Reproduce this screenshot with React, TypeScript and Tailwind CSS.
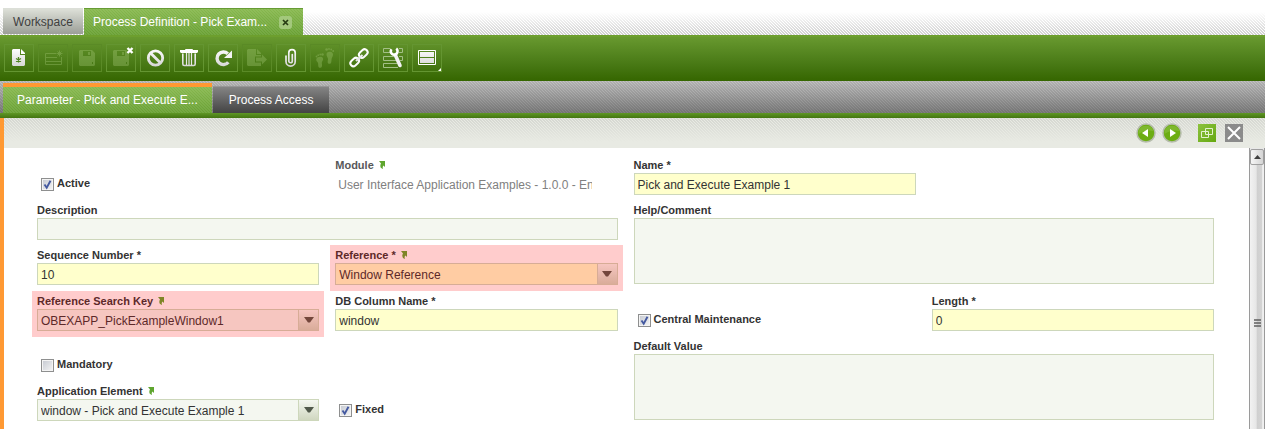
import { useId, useState, type ReactNode } from 'react';

function Svg({ children }: { children: ReactNode }) {
  return (
    <svg viewBox="0 0 20 20" width="20" height="20" className="overflow-visible" aria-hidden="true">
      {children}
    </svg>
  );
}

const NewIcon = (
  <Svg>
    <defs>
      <linearGradient id="metal" x1="0" y1="0" x2="0" y2="20" gradientUnits="userSpaceOnUse">
        <stop offset="0" stopColor="#ffffff" />
        <stop offset="1" stopColor="#d2d2d2" />
      </linearGradient>
    </defs>
    <path d="M4 1h7v6h5v10l-1 1H4l-1-1V2z" fill="url(#metal)" />
    <path d="M12 1l4 4v1h-4z" fill="#fff" />
    <path d="M9.500 9v5.500M7 10.500l5 3M12 10.500l-5 3" stroke="#4f8520" strokeWidth="1.300" />
  </Svg>
);

const GridIcon = (
  <Svg>
    <g fill="none" stroke="#a5c977">
      <path d="M13 5.500H2.500v11h16V9M2.500 9.500H14M2.500 13.500h16" />
      <path d="M16.500 2.500v6M13.500 5.500h6M14.500 3.500l4 4M18.500 3.500l-4 4" />
    </g>
  </Svg>
);

const floppy = (
  <path
    fill="#a5c977"
    fillRule="evenodd"
    d="M3 2h12l3 3v12l-1 1H3l-1-1V3zM6 3v5h8V3zM11 4h2v3h-2zM15 14h1v2h-1z"
  />
);

const SaveIcon = <Svg>{floppy}</Svg>;

const SaveCloseIcon = (
  <Svg>
    <g opacity="0.35">{floppy}</g>
    <path d="M16.500 0l5 5M21.500 0l-5 5" stroke="#fff" strokeWidth="2.400" />
  </Svg>
);

const BanIcon = (
  <Svg>
    <g fill="none" stroke="url(#metal)" strokeWidth="2.800">
      <circle cx="10.500" cy="10" r="7.200" />
      <path d="M5.500 5l10 10" />
    </g>
  </Svg>
);

const TrashIcon = (
  <Svg>
    <path d="M6.500 3V1.500h7V3" fill="none" stroke="#fff" />
    <path d="M1 2h18v2l-1 1H2L1 4z" fill="#fff" />
    <path d="M3.800 5.500V16q0 1.500 1.500 1.500h9.400q1.500 0 1.500-1.500V5.500" fill="none" stroke="url(#metal)" strokeWidth="1.600" />
    <path d="M7.500 5v12M10 5v12M12.500 5v12" stroke="#e8e8e8" strokeWidth="1.200" />
  </Svg>
);

const RefreshIcon = (
  <Svg>
    <path d="M14.800 5.800A6.300 6.300 0 1 0 15.300 14.200" fill="none" stroke="url(#metal)" strokeWidth="3.400" />
    <path d="M19 2.500V10h-8z" fill="#f4f4f4" />
  </Svg>
);

const ExportIcon = (
  <Svg>
    <path d="M1 1h8v6h5v1.500H8v6h6V18H1l-1-1V2z" fill="#a5c977" />
    <path d="M10 1l4 4v1h-4z" fill="#a5c977" />
    <path d="M9 9.500h6V6.500l5 5-5 5v-3H9z" fill="#a5c977" />
  </Svg>
);

const ClipIcon = (
  <Svg>
    <path
      d="M5 8v5.500a4.600 4.600 0 0 0 9.200 0V4.800a3.200 3.200 0 0 0-6.400 0V13a1.700 1.700 0 0 0 3.500 0V6.500"
      fill="none"
      stroke="url(#metal)"
      strokeWidth="1.700"
      strokeLinecap="round"
    />
  </Svg>
);

const StepsIcon = (
  <Svg>
    <g fill="#a5c977">
      <path d="M1.300 11c1-2.500 5.500-3 6.700-.8.800 2-1.500 3.300-1.200 5 .6 2 .4 4.600-1.800 4.600-2.400 0-1.500-3-2-4.800-.4-1.400-2.300-2.200-1.700-4z" />
      <path d="M11.500 6c.5-2.500 4.500-3 6.200-.8 1 1.900-.5 3.500-1 5.300-.5 2 .2 5.300-2.200 5.300-2.200 0-2-2.300-1.500-4.300.4-1.800-1.900-3.300-1.500-5.500z" />
      <circle cx="1.500" cy="8.500" r=".9" />
      <circle cx="3.200" cy="7.200" r=".9" />
      <circle cx="5.200" cy="6.500" r=".9" />
      <circle cx="7.500" cy="6.500" r="1.300" />
      <circle cx="11.600" cy="1.500" r="1.300" />
      <circle cx="14" cy="1" r=".9" />
      <circle cx="16.200" cy="1.500" r=".9" />
      <circle cx="18.200" cy="3" r=".9" />
    </g>
  </Svg>
);

const LinkIcon = (
  <Svg>
    <g fill="none" stroke="url(#metal)" strokeWidth="2">
      <rect x="-4.800" y="-3" width="9.600" height="6" rx="3" transform="translate(14.300 5.500) rotate(-43)" />
      <rect x="-4.800" y="-3" width="9.600" height="6" rx="3" transform="translate(5.700 14) rotate(-43)" />
      <path d="M7 13l6.500-6" />
    </g>
  </Svg>
);

const ToolsIcon = (
  <Svg>
    <g fill="none" stroke="#a3bf86">
      <path d="M7 .5H.5v4H7M16 .5h3.500v4H16M11 8.500H.5v4H13M16 8.500h3.500v4H17M14 15.500H.5v4H15" />
    </g>
    <path d="M12.300 7l4.700 10.500" stroke="#f2f2f2" strokeWidth="3.600" strokeLinecap="round" />
    <path d="M8.500 1.200A3.400 3.400 0 1 0 13.200 .6" fill="none" stroke="#fff" strokeWidth="2.600" />
  </Svg>
);

const LayoutIcon = (
  <Svg>
    <path d="M1.500 2.500h17v14h-17z" fill="none" stroke="#fff" />
    <path d="M3 4h14v5H3zM3 10h14v5H3z" fill="url(#metal)" />
    <path d="M24 20v3h-3z" fill="#fff" />
  </Svg>
);

const tools = [
  { label: 'New', icon: NewIcon, off: false },
  { label: 'New in grid', icon: GridIcon, off: true },
  { label: 'Save', icon: SaveIcon, off: true },
  { label: 'Save and close', icon: SaveCloseIcon, off: false },
  { label: 'Undo', icon: BanIcon, off: false },
  { label: 'Delete', icon: TrashIcon, off: false },
  { label: 'Refresh', icon: RefreshIcon, off: false },
  { label: 'Export', icon: ExportIcon, off: true },
  { label: 'Attachments', icon: ClipIcon, off: false },
  { label: 'Audit trail', icon: StepsIcon, off: true },
  { label: 'Link', icon: LinkIcon, off: false },
  { label: 'Customize', icon: ToolsIcon, off: false },
  { label: 'View', icon: LayoutIcon, off: false },
];

function Jump() {
  return (
    <svg viewBox="0 0 7 8" width="7" height="8" className="mt-[2px] ml-[5px] shrink-0" aria-hidden="true">
      <path d="M0 0h6v6L4.500 4.500Q3 5.500 4 8 .5 7 1.500 3.500L2 2.500z" fill="#5fa62f" />
    </svg>
  );
}

type FieldProps = {
  label: string;
  place: string;
  link?: boolean;
  muted?: boolean;
  marked?: boolean;
  children: (id: string) => ReactNode;
};

function Field({ label, place, link, muted, marked, children }: FieldProps) {
  const id = useId();
  return (
    <div className={'relative min-w-0 ' + place}>
      <div className="flex h-[14px] items-start">
        <label htmlFor={id} className={'text-[11px] leading-3 font-bold whitespace-nowrap ' + (muted ? 'text-[#58585a]' : 'text-[#333333]')}>
          {label}
        </label>
        {link && <Jump />}
      </div>
      {children(id)}
      {marked && <div className="pointer-events-none absolute -inset-x-[5px] -top-1 -bottom-[6px] bg-[#ff0000]/20" />}
    </div>
  );
}

const box = 'block w-full rounded-none border border-[#cdd7bb] text-[12px] text-[#333333] outline-none ';

function TextBox({ id, value, required }: { id: string; value: string; required?: boolean }) {
  return <input id={id} type="text" defaultValue={value} className={box + 'h-[22px] px-[3px] pt-px ' + (required ? 'bg-[#ffffcc]' : 'bg-[#f4f7f0]')} />;
}

function Area({ id }: { id: string }) {
  return <textarea id={id} className={box + 'h-[66px] resize-none bg-[#f4f7f0] px-[3px]'} />;
}

function Combo({ id, value, required }: { id: string; value: string; required?: boolean }) {
  return (
    <div className="relative">
      <select id={id} className={box + 'h-[22px] appearance-none pt-px pr-6 pl-[3px] ' + (required ? 'bg-[#ffffcc]' : 'bg-[#f4f7f0]')}>
        <option>{value}</option>
      </select>
      <div className="pointer-events-none absolute top-0 right-0 flex h-[22px] w-[21px] items-center justify-center border border-[#cdd7bb] bg-linear-to-b from-[#f4f7f0] to-[#d0d7c0]">
        <svg viewBox="0 0 10 6" width="10" height="6" aria-hidden="true">
          <path d="M0 0h10L6 5.500H4z" fill="#50584a" />
        </svg>
      </div>
    </div>
  );
}

function Check({ label, place, initial }: { label: string; place: string; initial: boolean }) {
  const [on, setOn] = useState(initial);
  return (
    <div className={'min-w-0 pt-[17px] pl-1 ' + place}>
      <label className="flex items-start text-[11px] leading-[14px] font-bold text-[#333333]">
        <span className="relative mt-[2px] mr-[3px] block size-[13px]">
          <input
            type="checkbox"
            checked={on}
            onChange={() => setOn(!on)}
            className="block size-[13px] appearance-none border border-[#8e8f8f] bg-linear-to-br from-[#c4c8d0] to-[#f6f6f6] shadow-[inset_0_0_0_1px_#f4f4f4]"
          />
          {on && (
            <svg viewBox="0 0 13 13" width="13" height="13" className="pointer-events-none absolute top-0 left-0" aria-hidden="true">
              <path d="M3.500 6.500l2.200 3.200L9.500 2.800" fill="none" stroke="#4459a0" strokeWidth="1.900" />
            </svg>
          )}
        </span>
        {label}
      </label>
    </div>
  );
}

function RoundButton({ label, d }: { label: string; d: string }) {
  return (
    <button type="button" aria-label={label} className="size-5">
      <svg viewBox="0 0 20 20" width="20" height="20" aria-hidden="true">
        <circle cx="10" cy="10" r="9" fill="#6cad12" stroke="#b5bcab" strokeWidth="1.500" />
        <path d="M2.500 8a8 8 0 0 1 15 0q-8-2-15 3z" fill="#8bc040" opacity=".6" />
        <path d={d} fill="#fff" />
      </svg>
    </button>
  );
}

export default function App() {
  return (
    <div className="flex min-h-screen flex-col bg-white font-['Liberation_Sans',Arial,sans-serif] text-[12px] text-[#333333]">
      <nav className="flex h-[35px] items-end gap-px bg-[linear-gradient(to_bottom,#fff_35%,#ffffff33),linear-gradient(45deg,#c4c4c4_17%,#fff_17%,#fff_50%,#c4c4c4_50%,#c4c4c4_67%,#fff_67%)] [background-size:auto,3px_3px] pl-[3px]">
        <button type="button" className="mb-px h-[26px] w-20 border-t border-[#dcdfd8] bg-linear-to-b from-[#dde0d8] to-[#9c9f98] text-center text-[#404040]">
          Workspace
        </button>
        <div className="flex h-[27px] items-center border-t border-[#679c34] bg-[linear-gradient(45deg,#ffffff14_17%,transparent_17%,transparent_50%,#ffffff14_50%,#ffffff14_67%,transparent_67%),linear-gradient(to_bottom,#87b84e,#68a032)] [background-size:3px_3px,auto] pr-[11px] pl-[9px] text-white">
          <button type="button" className="whitespace-nowrap">
            Process Definition - Pick Exam...
          </button>
          <button type="button" aria-label="Close tab" className="ml-3 flex size-[13px] items-center justify-center rounded-[3px] bg-[#a3c87c]">
            <svg viewBox="0 0 7 7" width="7" height="7" aria-hidden="true">
              <path d="M1 1l5 5M6 1l-5 5" stroke="#263b12" strokeWidth="1.700" />
            </svg>
          </button>
        </div>
      </nav>

      <div className="flex h-[46px] items-start gap-1 border-t-2 border-[#6d9f2e] bg-linear-to-b from-[#68992f] to-[#356600] pt-[7px] pl-1">
        {tools.map((t) => (
          <button
            key={t.label}
            type="button"
            aria-label={t.label}
            disabled={t.off}
            className={'flex h-7 w-[30px] items-center justify-center border ' + (t.off ? 'border-[#5a8a26]' : 'border-[#649531]')}
          >
            <span className={t.off ? 'opacity-35' : ''}>{t.icon}</span>
          </button>
        ))}
      </div>

      <div className="flex h-8 items-end gap-px bg-[linear-gradient(45deg,#00000018_17%,transparent_17%,transparent_50%,#00000018_50%,#00000018_67%,transparent_67%),linear-gradient(to_bottom,#c4c4c4,#808080)] [background-size:3px_3px,auto] pl-[3px]">
        <button type="button" className="h-[30px] border-t-4 border-[#ff9933] bg-[linear-gradient(45deg,#ffffff14_17%,transparent_17%,transparent_50%,#ffffff14_50%,#ffffff14_67%,transparent_67%),linear-gradient(to_bottom,#87b84e,#68a032)] [background-size:3px_3px,auto] px-[14px] whitespace-nowrap text-white">
          Parameter - Pick and Execute E...
        </button>
        <button type="button" className="h-[27px] border-t border-[#979797] bg-linear-to-b from-[#858585] to-[#444444] px-4 whitespace-nowrap text-white">
          Process Access
        </button>
      </div>
      <div className="h-[5px] bg-linear-to-b from-[#5f9725] to-[#437511]" />

      <main className="flex flex-1 flex-col border-l-4 border-[#ff9933]">
        <header className="flex h-[30px] items-center justify-end bg-[linear-gradient(to_bottom,#e8eae333,#e8eae3_80%),linear-gradient(45deg,#d0d2cc_17%,#e8eae3_17%,#e8eae3_50%,#d0d2cc_50%,#d0d2cc_67%,#e8eae3_67%)] [background-size:auto,3px_3px] pr-[22px]">
          <div className="flex gap-[6px]">
            <RoundButton label="Previous" d="M12 6v8l-6-4z" />
            <RoundButton label="Next" d="M8 6v8l6-4z" />
          </div>
          <button type="button" aria-label="Restore" className="ml-4 size-[18px] bg-linear-to-br from-[#8cc23c] to-[#65a80c]">
            <svg viewBox="0 0 18 18" width="18" height="18" aria-hidden="true">
              <path d="M3.500 7.500h7v6h-7zM7.500 4.500h7v6h-7z" fill="none" stroke="#e3f0cf" />
            </svg>
          </button>
          <button type="button" aria-label="Close" className="ml-[9px] size-[18px] bg-[#8b8b8b]">
            <svg viewBox="0 0 18 18" width="18" height="18" aria-hidden="true">
              <path d="M3 3l12 12M15 3L3 15" stroke="#fff" strokeWidth="2" />
            </svg>
          </button>
        </header>

        <div className="flex flex-1">
          <form className="grid flex-1 auto-rows-min grid-cols-4 grid-rows-[45px_45px_46px_45px_45px_36px] gap-x-4 pt-[11px] pr-[35px] pl-[33px]">
            <Check label="Active" place="col-start-1 row-start-1" initial />
            <Field label="Module" place="col-start-2 row-start-1" link muted>
              {(id) => (
                <input
                  id={id}
                  type="text"
                  readOnly
                  defaultValue="User Interface Application Examples - 1.0.0 - English (USA)"
                  className="ml-[3px] block h-[22px] w-[254px] bg-transparent pt-px text-[12px] text-[#808080] outline-none"
                />
              )}
            </Field>
            <Field label="Name *" place="col-start-3 row-start-1">
              {(id) => <TextBox id={id} value="Pick and Execute Example 1" required />}
            </Field>
            <Field label="Description" place="col-span-2 col-start-1 row-start-2">
              {(id) => <TextBox id={id} value="" />}
            </Field>
            <Field label="Help/Comment" place="col-span-2 col-start-3 row-span-2 row-start-2">
              {(id) => <Area id={id} />}
            </Field>
            <Field label="Sequence Number *" place="col-start-1 row-start-3">
              {(id) => <TextBox id={id} value="10" required />}
            </Field>
            <Field label="Reference *" place="col-start-2 row-start-3 self-start" link marked>
              {(id) => <Combo id={id} value="Window Reference" required />}
            </Field>
            <Field label="Reference Search Key" place="col-start-1 row-start-4 self-start" link marked>
              {(id) => <Combo id={id} value="OBEXAPP_PickExampleWindow1" />}
            </Field>
            <Field label="DB Column Name *" place="col-start-2 row-start-4">
              {(id) => <TextBox id={id} value="window" required />}
            </Field>
            <Check label="Central Maintenance" place="col-start-3 row-start-4" initial />
            <Field label="Length *" place="col-start-4 row-start-4">
              {(id) => <TextBox id={id} value="0" required />}
            </Field>
            <Check label="Mandatory" place="col-start-1 row-start-5" initial={false} />
            <Field label="Default Value" place="col-span-2 col-start-3 row-span-2 row-start-5">
              {(id) => <Area id={id} />}
            </Field>
            <Field label="Application Element" place="col-start-1 row-start-6" link>
              {(id) => <Combo id={id} value="window - Pick and Execute Example 1" />}
            </Field>
            <Check label="Fixed" place="col-start-2 row-start-6" initial />
          </form>

          <div className="flex w-4 flex-col border-x border-[#9a9a9a] bg-[#e8e8e8] pt-px" aria-hidden="true">
            <div className="flex h-4 items-center justify-center rounded-xs border border-[#a0a0a0] bg-linear-to-r from-[#f6f6f6] to-[#d4d4d4]">
              <svg viewBox="0 0 7 4" width="7" height="4">
                <path d="M3.500 0L7 4H0z" fill="#404040" />
              </svg>
            </div>
            <div className="flex flex-1 flex-col items-center bg-[linear-gradient(to_right,#f2f2f2_0%,#e6e6e6_45%,#cfcfcf_50%,#d4d4d4_85%,#f0f0f0_90%)] pt-[154px]">
              <svg viewBox="0 0 7 8" width="7" height="8">
                <path d="M0 1h7M0 4h7M0 7h7" stroke="#606060" strokeWidth="1.500" />
              </svg>
            </div>
          </div>
        </div>
      </main>
    </div>
  );
}
